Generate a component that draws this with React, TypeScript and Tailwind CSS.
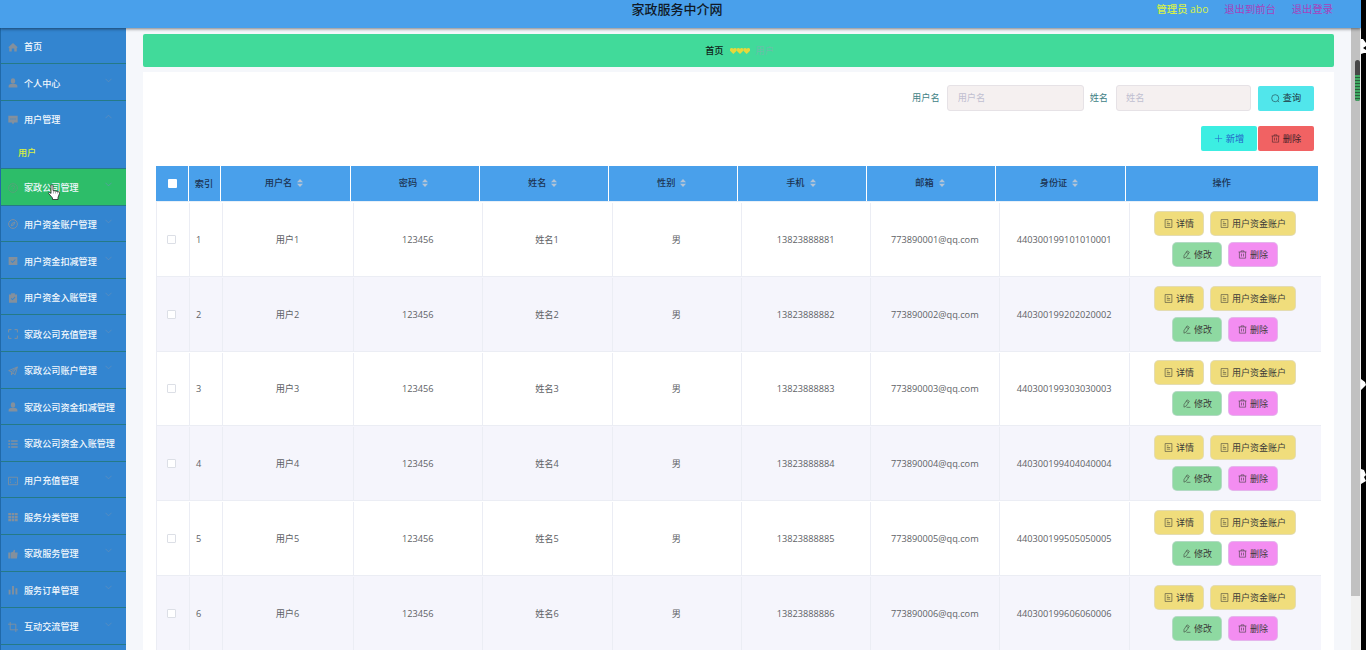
import { FunctionComponent, ReactNode } from "react";

interface MenuItem {
  label: string;
  icon: ReactNode;
  arrow?: "up" | "down";
  active?: boolean;
  children?: string[];
}

const userIcon = (
  <path d="M8 .5a3.500 3.500 0 0 1 3.500 3.500v1.500a3.500 3.500 0 0 1-7 0V4A3.500 3.500 0 0 1 8 .5zM1 15v-2c0-2 1.500-3.500 3.500-3.500h7c2 0 3.500 1.500 3.500 3.500v2z" />
);

const menuItems: MenuItem[] = [
  {
    label: "首页",
    icon: <path d="M8 1.500.5 8.500l1.500 1v5.500h4v-4.500h4V15h4V9.500l1.500-1z" />,
  },
  { label: "个人中心", arrow: "down", icon: userIcon },
  {
    label: "用户管理",
    arrow: "up",
    icon: (
      <path
        fillRule="evenodd"
        d="M.5 1h15v11H10l-2 3-2-3H.5zM4 5.500v1.500h1.500V5.500zm3.200 0v1.500h1.500V5.500zm3.300 0v1.500H12V5.500z"
      />
    ),
    children: ["用户"],
  },
  {
    label: "家政公司管理",
    arrow: "down",
    active: true,
    icon: (
      <g fill="none" stroke="currentColor" strokeWidth="1.5">
        <circle cx="8" cy="8" r="7" />
        <path d="M5.500 6.200a2.500 2.500 0 1 1 2.500 3v1.500M8 12v1" />
      </g>
    ),
  },
  {
    label: "用户资金账户管理",
    arrow: "down",
    icon: (
      <g fill="none" stroke="currentColor" strokeWidth="1.5">
        <circle cx="8" cy="8" r="7" />
        <path d="M11 5 9.200 9.200 5 11l1.800-4.200z" />
      </g>
    ),
  },
  {
    label: "用户资金扣减管理",
    arrow: "down",
    icon: (
      <path
        fillRule="evenodd"
        d="M1 1.500h14v13H1zM4 8l3.200 3.200L12.200 6l-1-1-4 4.200L5 7z"
      />
    ),
  },
  {
    label: "用户资金入账管理",
    arrow: "down",
    icon: (
      <path
        fillRule="evenodd"
        d="M1.500 2.500H5V.5h6v2h3.500V15.500h-13zm3 6.500 2.800 2.700 4.500-4.600-1-1-3.500 3.600-1.800-1.700z"
      />
    ),
  },
  {
    label: "家政公司充值管理",
    arrow: "down",
    icon: (
      <path
        fill="none"
        stroke="currentColor"
        strokeWidth="1.600"
        d="M1 5.500V1h4.500M10.500 1H15v4.500M15 10.500V15h-4.500M5.500 15H1v-4.500"
      />
    ),
  },
  {
    label: "家政公司账户管理",
    arrow: "down",
    icon: (
      <path
        fill="none"
        stroke="currentColor"
        strokeWidth="1.400"
        d="M1 7.500 15 1.500 11.500 14l-4-3L5.500 14.500V9zM5.500 9l9.500-7.500-7.500 9.500"
      />
    ),
  },
  { label: "家政公司资金扣减管理", icon: userIcon },
  {
    label: "家政公司资金入账管理",
    icon: (
      <path d="M.5 2h3v2.500h-3zm4.500 0h10.500v2.500H5zM.5 6.800h3v2.500h-3zm4.500 0h10.500v2.500H5zM.5 11.500h3V14h-3zm4.500 0h10.500V14H5z" />
    ),
  },
  {
    label: "用户充值管理",
    arrow: "down",
    icon: (
      <path
        fill="none"
        stroke="currentColor"
        strokeWidth="1.300"
        d="M.7 2h14.600v12H.7zM4 5v2M4 9v2M11.500 10.500h1.500"
      />
    ),
  },
  {
    label: "服务分类管理",
    arrow: "down",
    icon: (
      <path d="M.5 1.500h4.300v3.700H.5zm5.300 0h4.300v3.700H5.800zm5.300 0h4.400v3.700h-4.400zM.5 6.200h4.300v3.700H.5zm5.300 0h4.300v3.700H5.800zm5.300 0h4.400v3.700h-4.400zM.5 10.900h4.300v3.700H.5zm5.300 0h4.300v3.700H5.800zm5.300 0h4.400v3.700h-4.400z" />
    ),
  },
  {
    label: "家政服务管理",
    arrow: "down",
    icon: <path d="M.5 5.500h3.500V15H.5zm4.300 0L8 4.200 9.500 1l2 1-.5 3.500h4.500L14.300 15H4.800z" />,
  },
  {
    label: "服务订单管理",
    arrow: "down",
    icon: <path d="M1 7.500h3V15H1zM6.500 1.500h3V15h-3zM12 5h3v10h-3z" />,
  },
  {
    label: "互动交流管理",
    arrow: "down",
    icon: (
      <path
        fill="none"
        stroke="currentColor"
        strokeWidth="1.400"
        d="M3.500 0v12.500H16M0 3.500h12.500V16"
      />
    ),
  },
];

const columns = ["用户名", "密码", "姓名", "性别", "手机", "邮箱", "身份证"];

const users = [1, 2, 3, 4, 5, 6].map(n => ({
  index: n,
  cells: [
    `用户${n}`,
    "123456",
    `姓名${n}`,
    "男",
    `1382388888${n}`,
    `77389000${n}@qq.com`,
    `440300199${n}0${n}0${n}000${n}`,
  ],
}));

const Chevron = ({ up }: { up: boolean }) => (
  <svg viewBox="0 0 8 5" className="mb-1.5 ml-auto h-[5px] w-[7px] text-[#6b93b8]">
    <path
      d={up ? "M.5 4.500 4 1l3.500 3.500" : "M.5 .5 4 4 7.500 .5"}
      fill="none"
      stroke="currentColor"
      strokeWidth=".7"
    />
  </svg>
);

const Sidebar = () => (
  <aside className="-mt-[0.300px] h-[623px] w-[126px] shrink-0 overflow-hidden border-l border-[#2069a8] bg-[#3385d0] text-[9.100px] font-medium text-[#f2f8fd]">
    {menuItems.map(item => (
      <div key={item.label} className="border-b border-[#257a86]">
        <div
          className={`flex h-[35.600px] items-center pt-0.5 pr-3.5 pl-[7px] ${item.active ? "bg-[#2dbd69]" : ""}`}>
          <svg
            viewBox="0 0 16 16"
            fill="currentColor"
            className={`mr-1.5 h-2.5 w-2.5 shrink-0 ${item.active ? "text-[#55a27a]" : "text-[#83909d]"}`}>
            {item.icon}
          </svg>
          <span className="whitespace-nowrap">{item.label}</span>
          {item.arrow && <Chevron up={item.arrow === "up"} />}
        </div>
        {item.children?.map(child => (
          <div
            key={child}
            className="flex h-[31.600px] items-center pl-[17px] text-[#d9f03f]">
            {child}
          </div>
        ))}
      </div>
    ))}
  </aside>
);

const TrashIcon = () => (
  <svg
    viewBox="0 0 16 16"
    fill="none"
    stroke="currentColor"
    className="h-[9px] w-[9px] shrink-0">
    <path d="M1 3.500h14M5.500 3.500v-2h5v2M2.500 3.500v11h11v-11M6.200 6.500v5M9.800 6.500v5" />
  </svg>
);

const DocIcon = () => (
  <svg
    viewBox="0 0 16 16"
    fill="none"
    stroke="currentColor"
    className="h-[9px] w-[9px] shrink-0">
    <path d="M2 1h12v14H2zM5 5h3M5 8h6M5 11h6" />
  </svg>
);

const EditIcon = () => (
  <svg
    viewBox="0 0 16 16"
    fill="none"
    stroke="currentColor"
    className="h-[9px] w-[9px] shrink-0">
    <path d="m9 1.500 4 2.500-5.500 8.500-4 2V10zM7.500 4l4 2.500M8 14.800h7" />
  </svg>
);

const SortCaret = () => (
  <svg viewBox="0 0 6 8" className="ml-[5px] h-2 w-1.5 text-[#b4c4d6]">
    <path d="M3 0 6 3.300H0zM3 8 0 4.700h6z" fill="currentColor" />
  </svg>
);

interface ButtonProps {
  icon: ReactNode;
  label: string;
  className: string;
}

const RowButton: FunctionComponent<ButtonProps> = ({
  icon,
  label,
  className,
}) => (
  <button
    className={`flex h-[25px] items-center gap-[3px] rounded-[5px] border border-[#d8dce8]/50 px-[9px] text-[9px] text-[#3a3a38] ${className}`}>
    {icon}
    {label}
  </button>
);

const ToolButton: FunctionComponent<ButtonProps> = ({
  icon,
  label,
  className,
}) => (
  <button
    className={`flex h-[25px] w-14 items-center justify-center gap-[3px] rounded-[2px] ${className}`}>
    {icon}
    {label}
  </button>
);

const HeaderRow = () => (
  <div className="flex h-[36px] w-[1162px] border-b border-[#e8f0f8] bg-[#49a0eb] font-medium text-[#1c3352]">
    <div className="flex w-[33px] items-center justify-center border-r border-white">
      <span className="h-[9px] w-[9px] rounded-[1px] bg-white" />
    </div>
    <div className="flex w-8 items-center justify-center border-r border-white pr-px">
      索引
    </div>
    {columns.map(column => (
      <div
        key={column}
        className="flex w-[129.100px] items-center justify-center border-r border-white pr-[3px] pb-0.5 nth-[3]:w-[130px]">
        {column}
        <SortCaret />
      </div>
    ))}
    <div className="flex flex-1 items-center justify-center pb-px">操作</div>
  </div>
);

const UserTable = () => (
  <div className="mt-[15px] ml-[13px] w-[1165px]">
    <HeaderRow />
    {users.map(user => (
      <div
        key={user.index}
        className={`flex h-[74.800px] border-b border-l border-[#ebedf4] pt-px text-[#606266] ${user.index % 2 ? "bg-white" : "bg-[#f5f5fc]"}`}>
        <div className="flex w-[33px] items-center justify-center border-r border-[#ebedf4] pr-[3px]">
          <span className="h-[9px] w-[9px] rounded-[1px] border border-[#dcdfe6] bg-white" />
        </div>
        <div className="flex w-[33px] items-center border-r border-[#ebedf4] pl-1.5">
          {user.index}
        </div>
        {user.cells.map((cell, i) => (
          <div
            key={columns[i]}
            className="flex w-[129.300px] items-center justify-center border-r border-[#ebedf4] pr-px nth-[3]:w-[131px]">
            {cell}
          </div>
        ))}
        <div className="flex flex-1 flex-col items-center justify-center gap-1.5 pr-px pb-px">
          <div className="flex gap-1.5">
            <RowButton icon={<DocIcon />} label="详情" className="bg-[#f0dd7c]" />
            <RowButton
              icon={<DocIcon />}
              label="用户资金账户"
              className="bg-[#f0dd7c]"
            />
          </div>
          <div className="flex gap-1.5">
            <RowButton icon={<EditIcon />} label="修改" className="bg-[#8ed9a1]" />
            <RowButton icon={<TrashIcon />} label="删除" className="bg-[#f38df1]" />
          </div>
        </div>
      </div>
    ))}
  </div>
);

const SearchBar = () => (
  <div className="flex items-center justify-end pt-[13px] pr-5">
    <label className="text-[#3f7f86]">用户名</label>
    <input
      placeholder="用户名"
      className="ml-[7px] h-[26px] w-[137px] rounded-[3px] border border-[#e6e2e6] bg-[#f5f0f0] px-2.5 pb-0.5 placeholder:text-[#c0bfd0]"
    />
    <label className="ml-1.5 text-[#3f7f86]">姓名</label>
    <input
      placeholder="姓名"
      className="mr-[7px] ml-2 h-[26px] w-[135px] rounded-[3px] border border-[#e6e2e6] bg-[#f5f0f0] px-[9px] pb-0.5 placeholder:text-[#c0bfd0]"
    />
    <ToolButton
      label="查询"
      className="bg-[#51e6eb] text-[#1f3540]"
      icon={
        <svg
          viewBox="0 0 16 16"
          fill="none"
          stroke="currentColor"
          className="h-[9px] w-[9px]">
          <circle cx="7.500" cy="7.500" r="6.300" />
          <path d="m12 12 2.500 2.500" />
        </svg>
      }
    />
  </div>
);

const App = () => (
  <div className="flex h-[650px] w-[1366px] overflow-hidden bg-black font-['Open_Sans','Noto_Sans_CJK_SC',sans-serif] text-[9.200px] leading-none">
    <div className="flex w-[1361px] flex-col bg-[#f5f7fb]">
      <header className="relative z-10 flex h-7 shrink-0 items-start justify-center bg-[#49a0eb] shadow-[0_1px_3px_rgba(0,0,0,0.5)]">
        <h1 className="mt-[3px] ml-[-7px] text-[13px] font-medium text-[#101a28]">
          家政服务中介网
        </h1>
        <nav className="absolute top-1 right-[28px] flex gap-4 text-[10.300px] text-[#a742bd]">
          <span className="font-medium text-[#d6f04a]">管理员 abo</span>
          <span>退出到前台</span>
          <span>退出登录</span>
        </nav>
      </header>
      <div className="flex min-h-0 flex-1">
        <Sidebar />
        <main className="ml-[17px] w-[1191px] shrink-0">
          <div className="mt-1.5 flex h-[33px] items-center justify-center rounded-[2px] bg-[#41da9a] pl-0.5">
            <span className="font-medium text-[#101a18]">首页</span>
            <svg viewBox="0 0 30 9" className="mx-1.5 h-1.5 w-5 text-[#e6d83b]">
              <g fill="currentColor">
                <path d="M5 9 0 4V1l2-1h1l2 1 2-1h1l2 1v3z" />
                <path d="M15 9 10 4V1l2-1h1l2 1 2-1h1l2 1v3z" />
                <path d="M25 9 20 4V1l2-1h1l2 1 2-1h1l2 1v3z" />
              </g>
            </svg>
            <span className="text-[#68bfa9]">用户</span>
          </div>
          <section className="mt-[5px] h-[600px] bg-white">
            <SearchBar />
            <div className="mt-[15px] flex justify-end gap-px pr-5">
              <ToolButton
                label="新增"
                className="bg-[#3ceee2] text-[#2463c9]"
                icon={
                  <svg
                    viewBox="0 0 16 16"
                    stroke="currentColor"
                    className="h-[9px] w-[9px]">
                    <path d="M8 1.500v13M1.500 8h13" />
                  </svg>
                }
              />
              <ToolButton
                label="删除"
                className="bg-[#f16263] text-[#402127]"
                icon={<TrashIcon />}
              />
            </div>
            <UserTable />
          </section>
        </main>
        {/* Page scrollbar */}
        <div className="ml-auto h-full w-2.5 bg-[#f1f1f1]">
          <div className="h-[568px] w-[9px] bg-[#c1c1c1]" />
        </div>
      </div>
    </div>

    {/* Level meter over the scrollbar */}
    <div className="absolute top-[60px] left-[1355px] z-20 h-[41px] w-[5px] overflow-hidden rounded-full bg-[#474747]">
      <div className="mt-[15px] h-[26px] bg-[repeating-linear-gradient(#3fa862_0_2px,#2c5c3c_2px_3px)]" />
    </div>

    {/* White marks at the right edge */}
    <svg
      viewBox="0 0 5 450"
      fill="white"
      className="absolute top-[38px] left-[1361px] z-20 h-[450px] w-[5px]">
      <path d="M0 1h2l3 4v3L2 10l3 2v3H3L0 16zM0 341l4 3 1 3-5 5zM0 431l3 1 2 5-2 2 2 4-5 3z" />
    </svg>

    {/* Hand cursor */}
    <svg
      viewBox="0 0 12 17"
      className="absolute top-[184px] left-[48px] z-20 h-[17px] w-3">
      <path
        d="M3 1.500c0-1 2-1 2 0v5l5 1c1 .3 1.500 1 1.500 2L10 13.500v2H4.500v-1.500L.7 9.500C.3 8.300 1.500 7.800 3 9.500z"
        fill="white"
        stroke="#222"
        strokeWidth=".8"
      />
      <path d="M5.500 7v2.500M7.500 7.500v2M9.500 8v1.500" stroke="#777" strokeWidth=".6" />
    </svg>
  </div>
);

export default App;
